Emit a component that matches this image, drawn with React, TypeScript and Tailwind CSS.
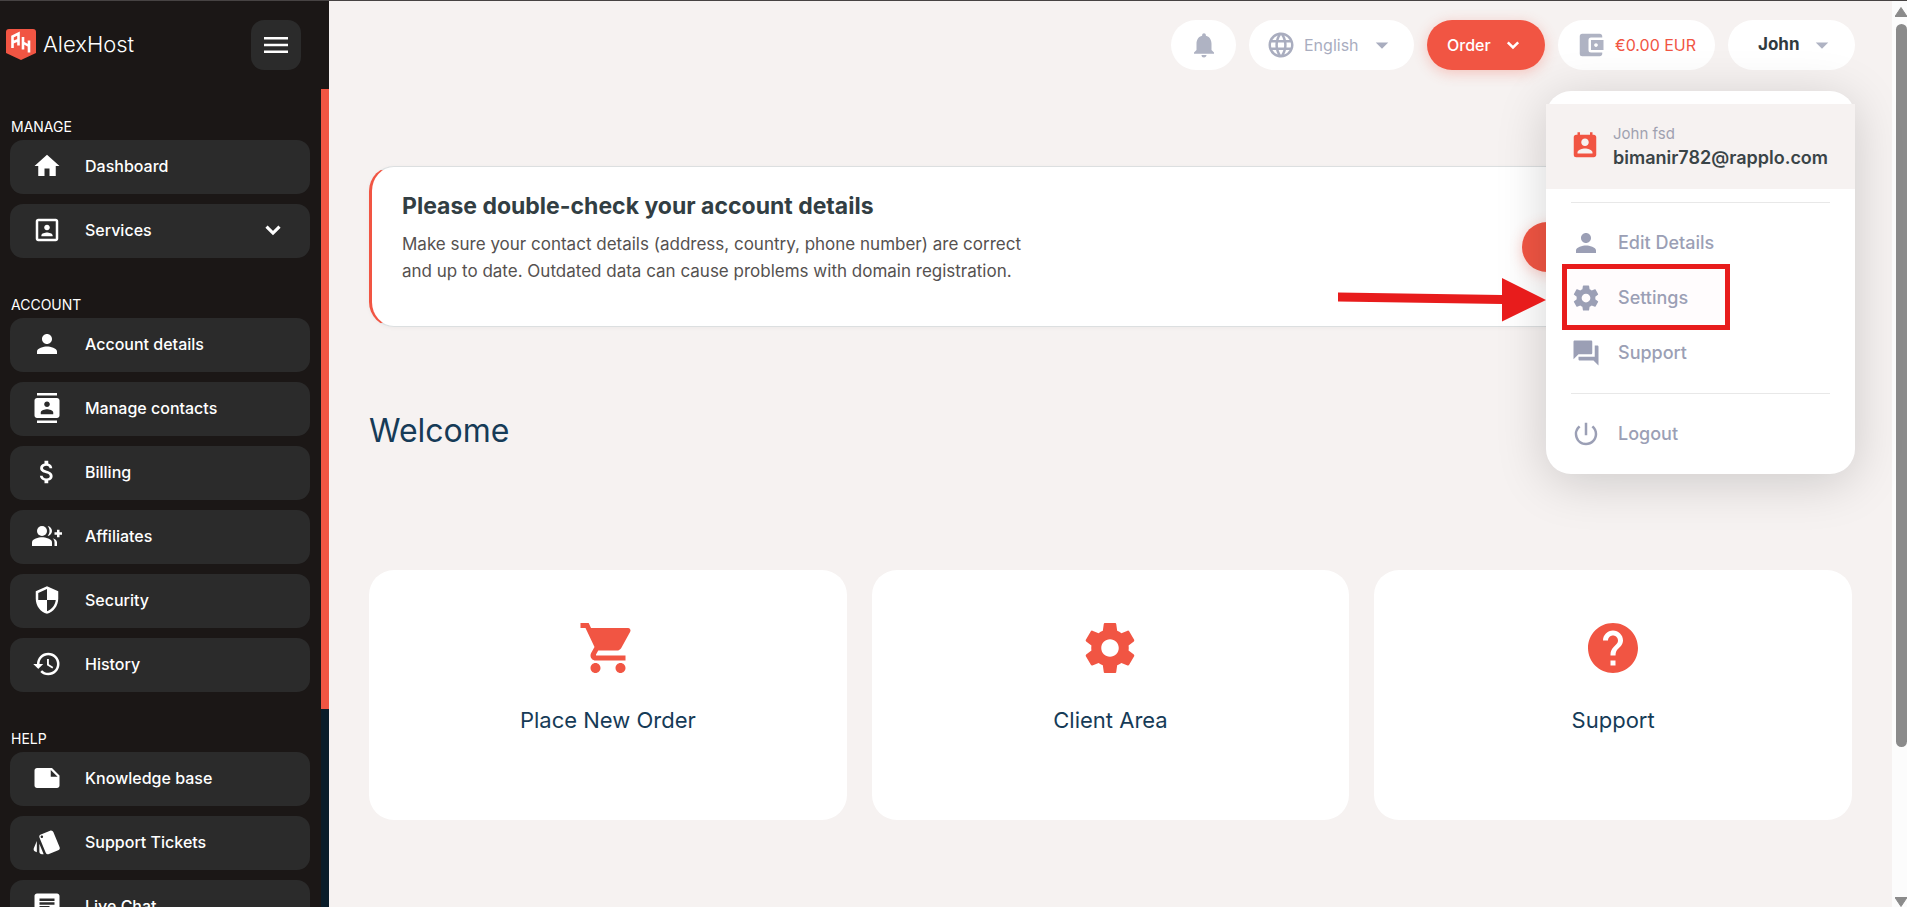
import type { ReactNode } from "react";
import {
  MdAccountBalanceWallet,
  MdArrowDropDown,
  MdAttachMoney,
  MdChat,
  MdContacts,
  MdForum,
  MdHelp,
  MdHistory,
  MdHome,
  MdLanguage,
  MdNote,
  MdNotifications,
  MdPermContactCalendar,
  MdPerson,
  MdPortrait,
  MdPowerSettingsNew,
  MdSecurity,
  MdShoppingCart,
  MdStyle,
} from "react-icons/md";

type IconProps = { size?: number; className?: string };
type Icon = (props: IconProps) => ReactNode;
type NavItem = { label: string; icon: Icon; expandable?: boolean };
type NavSection = { title: string; items: NavItem[] };

function CogIcon({ size = 24, className }: IconProps) {
  return (
    <svg width={size} height={size} viewBox="0 0 24 24" fill="currentColor" className={className} aria-hidden="true">
      <path d="M19.43 12.98c.04-.32.07-.64.07-.98s-.03-.66-.07-.98l2.11-1.65c.19-.15.24-.42.12-.64l-2-3.46c-.12-.22-.39-.3-.61-.22l-2.49 1c-.52-.4-1.08-.73-1.69-.98l-.38-2.65C14.46 2.18 14.25 2 14 2h-4c-.25 0-.46.18-.49.42l-.38 2.65c-.61.25-1.17.59-1.69.98l-2.49-1c-.23-.09-.49 0-.61.22l-2 3.46c-.13.22-.07.49.12.64l2.11 1.65c-.04.32-.07.65-.07.98s.03.66.07.98l-2.11 1.65c-.19.15-.24.42-.12.64l2 3.46c.12.22.39.3.61.22l2.49-1c.52.4 1.08.73 1.69.98l.38 2.65c.03.24.24.42.49.42h4c.25 0 .46-.18.49-.42l.38-2.65c.61-.25 1.17-.59 1.69-.98l2.49 1c.23.09.49 0 .61-.22l2-3.46c.12-.22.07-.49-.12-.64l-2.11-1.65zM12 15.5c-1.93 0-3.5-1.57-3.5-3.5s1.57-3.5 3.5-3.5 3.5 1.57 3.5 3.5-1.57 3.5-3.5 3.5z" />
    </svg>
  );
}

function GroupAddIcon({ size = 24, className }: IconProps) {
  return (
    <svg width={size} height={size} viewBox="0 0 24 24" fill="currentColor" className={className} aria-hidden="true">
      <path d="M22 9V7h-2v2h-2v2h2v2h2v-2h2V9z" />
      <circle cx="8" cy="8" r="4" />
      <path d="M8 13c-2.67 0-8 1.34-8 4v3h16v-3c0-2.66-5.33-4-8-4z" />
      <path d="M12.51 4.05C13.43 5.11 14 6.49 14 8s-.57 2.89-1.49 3.95C14.47 11.7 16 10.04 16 8s-1.53-3.7-3.49-3.95z" />
      <path d="M16.53 13.83C17.42 14.66 18 15.7 18 17v3h2v-3c0-1.45-1.59-2.51-3.47-3.17z" />
    </svg>
  );
}

function ChevronIcon({ size = 24, className }: IconProps) {
  return (
    <svg width={size} height={size} viewBox="0 0 24 24" fill="none" className={className} aria-hidden="true">
      <path d="M6.800 9.300L12 14.500l5.200-5.200" stroke="currentColor" strokeWidth="2.500" />
    </svg>
  );
}

const sections: NavSection[] = [
  {
    title: "MANAGE",
    items: [
      { label: "Dashboard", icon: MdHome },
      { label: "Services", icon: MdPortrait, expandable: true },
    ],
  },
  {
    title: "ACCOUNT",
    items: [
      { label: "Account details", icon: MdPerson },
      { label: "Manage contacts", icon: MdContacts },
      { label: "Billing", icon: MdAttachMoney },
      { label: "Affiliates", icon: GroupAddIcon },
      { label: "Security", icon: MdSecurity },
      { label: "History", icon: MdHistory },
    ],
  },
  {
    title: "HELP",
    items: [
      { label: "Knowledge base", icon: MdNote },
      { label: "Support Tickets", icon: MdStyle },
      { label: "Live Chat", icon: MdChat },
    ],
  },
];

const tiles: NavItem[] = [
  { label: "Place New Order", icon: MdShoppingCart },
  { label: "Client Area", icon: CogIcon },
  { label: "Support", icon: MdHelp },
];

function LogoMark() {
  return (
    <svg width="30" height="31" viewBox="0 0 30 31" aria-hidden="true">
      <path d="M3 0h24a3 3 0 0 1 3 3v21L15 31 0 24V3a3 3 0 0 1 3-3z" fill="#f15543" />
      <path
        d="M6.500 19V7.500L12.500 4.500V16.500M6.500 13.500L12.500 11M17 8V20.500M23 11.500V23.500M17 13.500L23 17"
        fill="none"
        stroke="#fff"
        strokeWidth="2.600"
      />
    </svg>
  );
}

function Sidebar() {
  return (
    <aside className="flex w-[329px] shrink-0 flex-col bg-[#1b1716] text-white">
      <div className="flex h-[88px] shrink-0 items-start justify-between pt-[19px] pr-7 pl-1.5">
        <a href="#home" className="flex h-[50px] items-center gap-[7px] pb-0.5 text-[22px] font-light">
          <LogoMark />
          AlexHost
        </a>
        <button
          type="button"
          aria-label="Toggle menu"
          className="flex size-[50px] items-center justify-center rounded-[13px] bg-[#2b2b2b]"
        >
          <svg width="24" height="16" viewBox="0 0 24 16" aria-hidden="true">
            <path d="M0 0h24v2.500H0zM0 6.750h24v2.500H0zM0 13.500h24v2.500H0z" fill="#fff" />
          </svg>
        </button>
      </div>
      <div className="flex min-h-0 flex-1">
        <nav className="flex min-w-0 flex-1 flex-col gap-[35px] overflow-hidden pt-[26px] pr-[11px] pl-[10px]">
          {sections.map((section) => (
            <section key={section.title} className="shrink-0">
              <h2 className="mb-px pl-px text-sm leading-6">{section.title}</h2>
              <ul className="flex flex-col gap-[10px]">
                {section.items.map(({ label, icon: Icon, expandable }) => (
                  <li key={label}>
                    <a
                      href="#nav"
                      className="flex h-[54px] items-center rounded-[13px] bg-[#2b2b2b] px-[22px] pb-0.5 text-base font-medium"
                    >
                      <Icon size={30} className="shrink-0" />
                      <span className="ml-[23px] flex-1">{label}</span>
                      {expandable && <ChevronIcon size={30} />}
                    </a>
                  </li>
                ))}
              </ul>
            </section>
          ))}
        </nav>
        <div className="w-2 shrink-0 bg-[#0a1d2a]">
          <div className="h-[620px] bg-[#f15543]" />
        </div>
      </div>
    </aside>
  );
}

function MenuItem({ icon: Icon, children }: { icon: Icon; children: ReactNode }) {
  return (
    <a href="#menu" className="flex h-[55px] items-center gap-[17px]">
      <Icon size={30} className="text-[#9b9fb5]" />
      {children}
    </a>
  );
}

function UserMenu() {
  return (
    <div className="absolute top-[71px] right-0 w-[309px] rounded-[25px] bg-white py-[13px] shadow-[0_8px_50px_rgba(0,0,0,0.17)]">
      <div className="flex h-[85px] items-center gap-[13px] bg-[#f6f2f1] px-6 pb-0.5">
        <MdPermContactCalendar size={30} className="shrink-0 text-[#f15543]" />
        <div className="leading-6">
          <div className="text-[15px] text-[#a0a1b0]">John fsd</div>
          <div className="text-lg leading-6 font-semibold text-[#3a4447]">bimanir782@rapplo.com</div>
        </div>
      </div>
      <div className="px-[25px] text-lg font-medium text-[#9b9fb5]">
        <hr className="mt-[13px] mb-3 border-[#e8e8e8]" />
        <MenuItem icon={MdPerson}>Edit Details</MenuItem>
        <div className="relative">
          <div className="pointer-events-none absolute -top-[6px] -left-[9px] h-[66px] w-[168px] border-[5px] border-[#e81c1c] bg-[#fffcfd]" />
          <svg
            className="pointer-events-none absolute top-[7px] -left-[233px]"
            width="208"
            height="46"
            viewBox="0 0 208 46"
            aria-hidden="true"
          >
            <path d="M0 15.500L164 18V1L208 23 164 44.500V27L0 24.500z" fill="#e81c1c" />
          </svg>
          <div className="relative">
            <MenuItem icon={CogIcon}>Settings</MenuItem>
          </div>
        </div>
        <MenuItem icon={MdForum}>Support</MenuItem>
        <hr className="mt-[13px] mb-3 border-[#e8e8e8]" />
        <MenuItem icon={MdPowerSettingsNew}>Logout</MenuItem>
      </div>
    </div>
  );
}

function TopBar() {
  return (
    <header className="relative z-10 flex shrink-0 justify-end gap-[13px] pt-[19px] pr-[37px] text-base">
      <button
        type="button"
        aria-label="Notifications"
        className="flex h-[50px] w-[65px] items-center justify-center rounded-full bg-white text-[#afb3c3]"
      >
        <MdNotifications size={30} />
      </button>
      <label className="flex h-[50px] w-[165px] items-center rounded-full bg-white px-[17px] text-[#a9adbf]">
        <MdLanguage size={30} className="shrink-0" />
        <select aria-label="Language" className="ml-2 min-w-0 flex-1 appearance-none bg-transparent">
          <option>English</option>
        </select>
        <MdArrowDropDown size={30} className="pointer-events-none shrink-0" />
      </label>
      <button
        type="button"
        className="flex h-[50px] w-[118px] items-center justify-between rounded-full bg-[#f15543] px-5 font-medium text-white shadow-[0_3px_14px_rgba(241,85,67,0.3)]"
      >
        Order
        <ChevronIcon size={24} />
      </button>
      <a
        href="#balance"
        className="flex h-[50px] w-[157px] items-center gap-[9px] rounded-full bg-white pl-[18px] text-[#f15543]"
      >
        <MdAccountBalanceWallet size={30} className="shrink-0 text-[#afb3c3]" />
        <span className="whitespace-nowrap">€0.00 EUR</span>
      </a>
      <div className="relative">
        <button
          type="button"
          className="flex h-[50px] w-[127px] items-center justify-between rounded-full bg-white pr-[18px] pl-[30px] text-[17px] font-bold text-[#303a3e]"
        >
          John
          <MdArrowDropDown size={30} className="text-[#afb3c3]" />
        </button>
        <UserMenu />
      </div>
    </header>
  );
}

function Scrollbar() {
  return (
    <div className="flex w-[15px] shrink-0 flex-col items-end bg-[#fcfcfc]">
      <svg width="12" height="10" viewBox="0 0 12 10" className="mt-[6px] shrink-0" aria-hidden="true">
        <path d="M6 0.500L12 9.500H0z" fill="#8b8b8b" stroke="#8b8b8b" strokeLinejoin="round" />
      </svg>
      <div className="mt-[7px] h-[723px] w-[11px] rounded-full bg-[#8b8b8b]" />
      <svg width="12" height="10" viewBox="0 0 12 10" className="mt-auto shrink-0" aria-hidden="true">
        <path d="M6 9.500L12 0.500H0z" fill="#8b8b8b" stroke="#8b8b8b" strokeLinejoin="round" />
      </svg>
    </div>
  );
}

export default function App() {
  return (
    <div className="flex h-screen overflow-hidden border-t border-[#474343] bg-[#f6f2f1] font-[Inter,Roboto,sans-serif]">
      <Sidebar />
      <div className="flex min-w-0 flex-1 flex-col">
        <TopBar />
        <main className="px-10 pt-24">
          <section className="flex items-start justify-between rounded-[25px] border border-l-[3px] border-[#dcdfe0] border-l-[#f15543] bg-white pt-[23px] pr-7 pb-[41px] pl-[30px] shadow-[0_1px_4px_rgba(0,0,0,0.04)]">
            <div>
              <h2 className="text-[23px] leading-8 font-bold text-[#323e43]">
                Please double-check your account details
              </h2>
              <p className="mt-[9px] max-w-[680px] text-[17px] leading-[27px] text-[#555150]">
                Make sure your contact details (address, country, phone number) are correct
                <br />
                and up to date. Outdated data can cause problems with domain registration.
              </p>
            </div>
            <button
              type="button"
              aria-label="Review details"
              className="mt-8 h-[50px] w-[301px] rounded-full bg-[#f15543] shadow-[0_3px_14px_rgba(241,85,67,0.3)]"
            />
          </section>
          <h1 className="mt-[79px] text-[32px] leading-[50px] text-[#163b57]">Welcome</h1>
          <div className="mt-[114px] grid grid-cols-3 gap-[25px]">
            {tiles.map(({ label, icon: Icon }) => (
              <a
                key={label}
                href="#tile"
                className="flex h-[250px] flex-col items-center rounded-[25px] bg-white pt-12 text-[22px] leading-8 text-[#163b57]"
              >
                <Icon size={60} className="mb-[26px] text-[#f15543]" />
                {label}
              </a>
            ))}
          </div>
        </main>
      </div>
      <Scrollbar />
    </div>
  );
}
